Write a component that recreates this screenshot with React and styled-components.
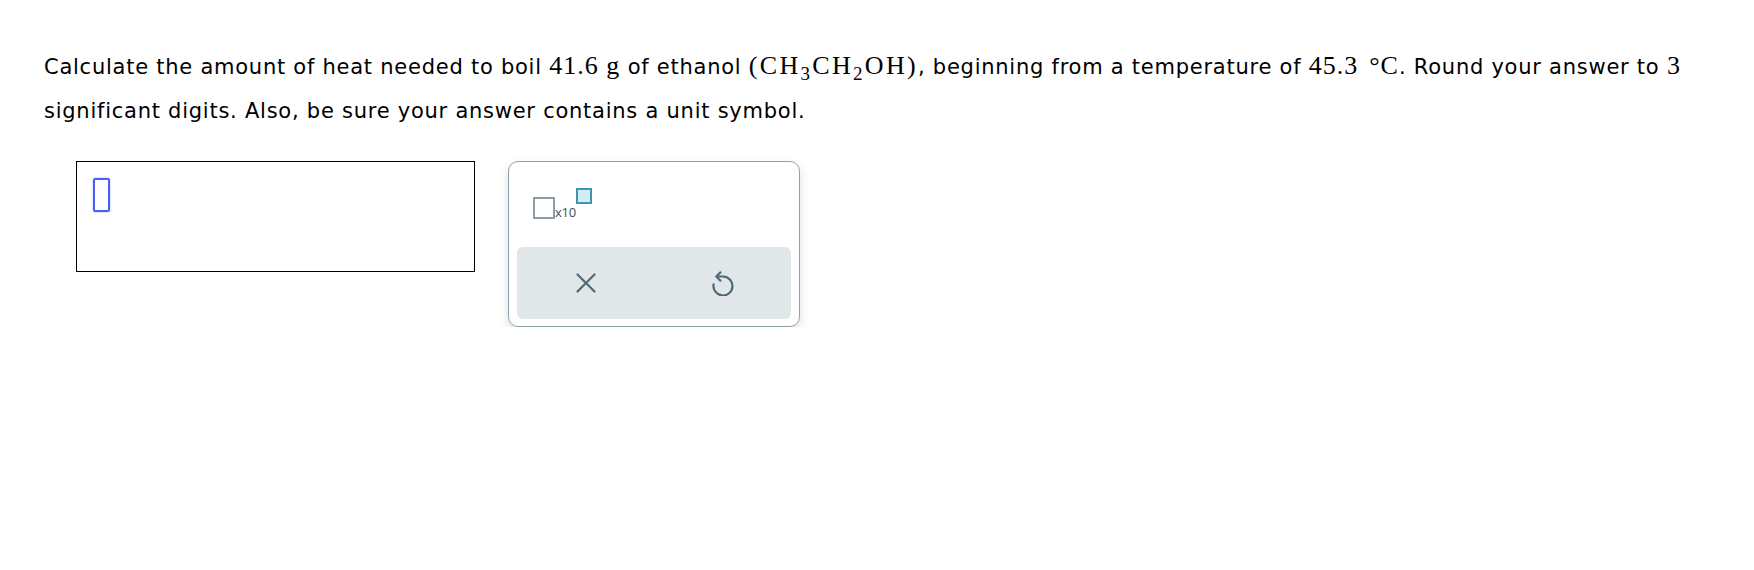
import React from "react";
import styled, { createGlobalStyle } from "styled-components";

const Global = createGlobalStyle`
  html, body {
    margin: 0;
    padding: 0;
    background: #fff;
  }
  body {
    font-family: "DejaVu Sans", Verdana, sans-serif;
    color: #000;
  }
`;

const Page = styled.div`
  padding: 44px 0 0 44px;
`;

const Question = styled.p`
  margin: 0;
  font-size: 21px;
  letter-spacing: 0.75px;
  line-height: 44px;
  white-space: nowrap;
`;

const Math = styled.span`
  font-family: "Liberation Serif", "Times New Roman", serif;
  font-size: 26px;
  letter-spacing: ${(p) => p.$spacing || 1}px;
`;

const Unit = styled.span`
  margin-left: ${(p) => p.$gap}px;
`;

const Sub = styled.sub`
  font-size: 19px;
  vertical-align: -6px;
  line-height: 0;
`;

const AnswerRow = styled.div`
  display: flex;
  align-items: flex-start;
  gap: 33px;
  margin: 28px 0 0 32px;
`;

const InputBox = styled.div`
  box-sizing: border-box;
  width: 399px;
  height: 111px;
  border: 1px solid #000;
  padding: 16px 0 0 16px;
`;

const Caret = styled.div`
  box-sizing: border-box;
  width: 17px;
  height: 34px;
  border: 2px solid #4a5ef7;
  border-radius: 2px;
  box-shadow: 0 0 2px rgba(74, 94, 247, 0.5);
`;

const Palette = styled.div`
  box-sizing: border-box;
  width: 292px;
  height: 166px;
  border: 1px solid #8ea0a8;
  border-radius: 10px;
  padding: 0 8px 7px 8px;
  display: flex;
  flex-direction: column;
  box-shadow: 0 4px 10px rgba(60, 80, 90, 0.18);
`;

const KeyArea = styled.div`
  flex: 1;
  display: flex;
  align-items: flex-start;
  padding: 26px 0 0 16px;
`;

const SciKey = styled.div`
  display: flex;
  align-items: flex-start;
`;

const Box = styled.div`
  box-sizing: border-box;
  width: ${(p) => p.$size}px;
  height: ${(p) => p.$size}px;
  border: 2px solid ${(p) => (p.$active ? "#3e98b1" : "#8b9ca4")};
  background: ${(p) => (p.$active ? "#d3ebf2" : "#fff")};
  margin-top: ${(p) => p.$top || 0}px;
`;

const Times = styled.span`
  font-family: "Open Sans", "DejaVu Sans", sans-serif;
  font-size: 13px;
  color: #3d525c;
  margin-top: 15px;
  letter-spacing: -0.3px;
`;

const ActionBar = styled.div`
  height: 72px;
  background: #e1e6e8;
  border-radius: 6px;
  display: grid;
  grid-template-columns: 1fr 1fr;
  align-items: center;
`;

const IconButton = styled.button`
  border: none;
  background: none;
  padding: 0;
  display: flex;
  justify-content: center;
  align-items: center;
  height: 100%;
  cursor: pointer;
  color: #4d6a77;
`;

const App = () => (
  <>
    <Global />
    <Page>
      <Question>
        Calculate the amount of heat needed to boil <Math>41.6&nbsp;g</Math>{" "}
        of ethanol{" "}
        <Math $spacing={2.3}>
          (CH<Sub>3</Sub>CH<Sub>2</Sub>OH)
        </Math>
        , beginning from a temperature of{" "}
        <Math>
          45.3<Unit $gap={11}>°C</Unit>
        </Math>
        . Round your answer to <Math>3</Math>
        <br />
        significant digits. Also, be sure your answer contains a unit symbol.
      </Question>
      <AnswerRow>
        <InputBox>
          <Caret />
        </InputBox>
        <Palette>
          <KeyArea>
            <SciKey>
              <Box $size={22} $top={9} />
              <Times>x10</Times>
              <Box $size={16} $active />
            </SciKey>
          </KeyArea>
          <ActionBar>
            <IconButton aria-label="clear">
              <svg width="22" height="22" viewBox="0 0 22 22" fill="none">
                <path
                  d="M2.5 2.5L19.5 19.5M19.5 2.5L2.5 19.5"
                  stroke="currentColor"
                  strokeWidth="2.2"
                  strokeLinecap="round"
                />
              </svg>
            </IconButton>
            <IconButton aria-label="undo">
              <svg width="24" height="26" viewBox="0 0 24 26" fill="none">
                <path
                  d="M5.5 6.5H12A9.5 9.5 0 1 1 2.6 14.4"
                  stroke="currentColor"
                  strokeWidth="2.2"
                  strokeLinecap="round"
                  strokeLinejoin="round"
                />
                <path
                  d="M9.5 2.3L5.3 6.5L9.5 10.7"
                  stroke="currentColor"
                  strokeWidth="2.2"
                  strokeLinecap="round"
                  strokeLinejoin="round"
                />
              </svg>
            </IconButton>
          </ActionBar>
        </Palette>
      </AnswerRow>
    </Page>
  </>
);

export default App;
